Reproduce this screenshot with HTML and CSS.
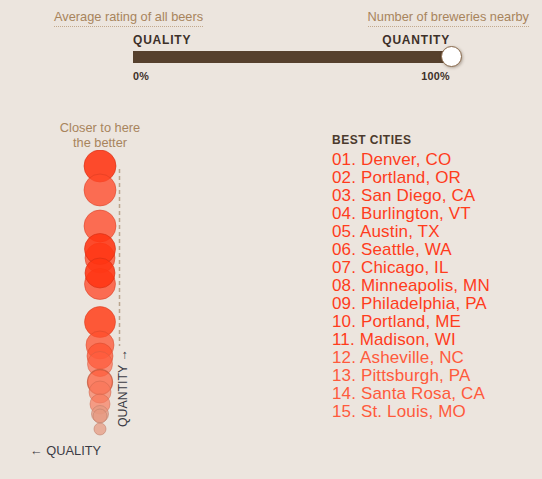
FILE: index.html
```
<!DOCTYPE html>
<html lang="en">
<head>
    <meta charset="UTF-8"/>
    <title>Best beer cities</title>
    <link rel="stylesheet" href="styles.css">
</head>
<body>
<div class="legend">
    <span class="legend-label">Average rating of all beers</span>
    <span class="legend-label">Number of breweries nearby</span>
</div>
<div class="slider">
    <div class="slider-ends">
        <span>QUALITY</span>
        <span>QUANTITY</span>
    </div>
    <div class="track"><span class="knob"></span></div>
    <div class="ticks">
        <span>0%</span>
        <span>100%</span>
    </div>
</div>
<div class="main">
    <div class="chart">
        <p class="note">Closer to here<br/>the better</p>
        <svg class="plot" width="200" height="290" viewBox="0 0 200 290">
            <line class="axis" x1="119.5" y1="19" x2="119.5" y2="196"/>
            <text class="axis-label" transform="translate(126.5 277) rotate(-90)">QUANTITY →</text>
            <circle class="dot hot" cx="100" cy="16" r="16"/>
            <circle class="dot warm" cx="100" cy="40" r="16"/>
            <circle class="dot warm" cx="100" cy="76" r="16"/>
            <circle class="dot warm" cx="100" cy="108" r="15"/>
            <circle class="dot hot" cx="100" cy="99" r="15.5"/>
            <circle class="dot warm" cx="100" cy="134" r="15.5"/>
            <circle class="dot hot" cx="100" cy="123" r="15"/>
            <circle class="dot hot2" cx="100" cy="172" r="15.5"/>
            <circle class="dot mid" cx="100" cy="195" r="14"/>
            <circle class="dot mid" cx="100" cy="206" r="13"/>
            <circle class="dot soft" cx="100" cy="214" r="12.5"/>
            <circle class="dot ring" cx="100" cy="232" r="12.5"/>
            <circle class="dot pale" cx="100" cy="242" r="11"/>
            <circle class="dot pale" cx="100" cy="254" r="10"/>
            <circle class="dot faint" cx="100" cy="264" r="8.5"/>
            <circle class="dot faint" cx="100" cy="266" r="7"/>
            <circle class="dot faint" cx="100" cy="279" r="6"/>
        </svg>
        <p class="quality">← QUALITY</p>
    </div>
    <div class="cities">
        <h2>BEST CITIES</h2>
        <ol>
            <li>01. Denver, CO</li>
            <li>02. Portland, OR</li>
            <li>03. San Diego, CA</li>
            <li>04. Burlington, VT</li>
            <li>05. Austin, TX</li>
            <li>06. Seattle, WA</li>
            <li>07. Chicago, IL</li>
            <li>08. Minneapolis, MN</li>
            <li>09. Philadelphia, PA</li>
            <li>10. Portland, ME</li>
            <li>11. Madison, WI</li>
            <li class="lower">12. Asheville, NC</li>
            <li class="lower">13. Pittsburgh, PA</li>
            <li class="lower">14. Santa Rosa, CA</li>
            <li class="lower">15. St. Louis, MO</li>
        </ol>
    </div>
</div>
</body>
</html>
```

FILE: styles.css
```
html {background:#ece5de;}
body {color:#3b3b44;font:13px/1.2 "Liberation Sans", Arial, sans-serif;margin:0;height:479px;overflow:hidden;}
p, h2, ol {margin:0;}

.legend {display:flex;justify-content:space-between;margin:0 13px 0 54px;padding-top:9px;}
.legend-label {border-bottom:1px dotted #c2a98d;color:#a8845c;font-size:12.8px;line-height:16px;padding-bottom:1px;}

.slider {margin-left:133px;width:319px;}
.slider-ends, .ticks {display:flex;justify-content:space-between;padding-right:2px;}
.slider-ends {color:#3d3029;font-size:12px;font-weight:bold;letter-spacing:0.8px;line-height:13px;margin-top:7px;}
.track {background:#56402d;height:12px;margin-top:4px;position:relative;}
.knob {background:#fff;border:1px solid #8a6a4c;border-radius:50%;box-shadow:1px 1px 3px rgba(60,40,20,0.35);height:19px;position:absolute;right:-10px;top:-5px;width:19px;}
.ticks {color:#3d3029;font-size:10.8px;font-weight:bold;letter-spacing:0.3px;line-height:14px;margin-top:6px;}

.main {display:flex;margin-top:38px;}
.chart {width:200px;}
.note {color:#a8845c;font-size:12.8px;line-height:14.6px;text-align:center;}
.plot {display:block;}
.axis {stroke:#b9a48c;stroke-dasharray:4 3;stroke-width:1.5;}
.axis-label {fill:#3b3b44;font:12.3px "Liberation Sans", Arial, sans-serif;}
.dot {stroke-width:1;}
.hot {fill:#ff3412;fill-opacity:0.88;stroke:#d42e14;stroke-opacity:0.6;}
.hot2 {fill:#ff4420;fill-opacity:0.88;stroke:#d43a1c;stroke-opacity:0.5;}
.warm {fill:#ff4a2a;fill-opacity:0.78;stroke:#d63a20;stroke-opacity:0.5;}
.mid {fill:#ff5230;fill-opacity:0.75;stroke:#d4482c;stroke-opacity:0.5;}
.soft {fill:#ff6040;fill-opacity:0.65;stroke:#d45a40;stroke-opacity:0.5;}
.ring {fill:#ff5a38;fill-opacity:0.72;stroke:#c4553a;stroke-opacity:0.75;stroke-width:1.3;}
.pale {fill:#f8785a;fill-opacity:0.68;stroke:#cc664e;stroke-opacity:0.5;}
.faint {fill:#e6987f;fill-opacity:0.72;stroke:#c2806c;stroke-opacity:0.6;}
.quality {font-size:12.8px;line-height:15px;margin:3px 0 0 30px;}

.cities {margin:12px 0 0 132px;}
.cities h2 {color:#4b3a2d;font-size:12px;letter-spacing:0.5px;line-height:14px;}
.cities ol {color:#ff3c1c;font-size:17px;letter-spacing:0.15px;line-height:18px;list-style:none;margin-top:4px;padding:0;}
.cities .lower {color:#ff5a3c;}
```
